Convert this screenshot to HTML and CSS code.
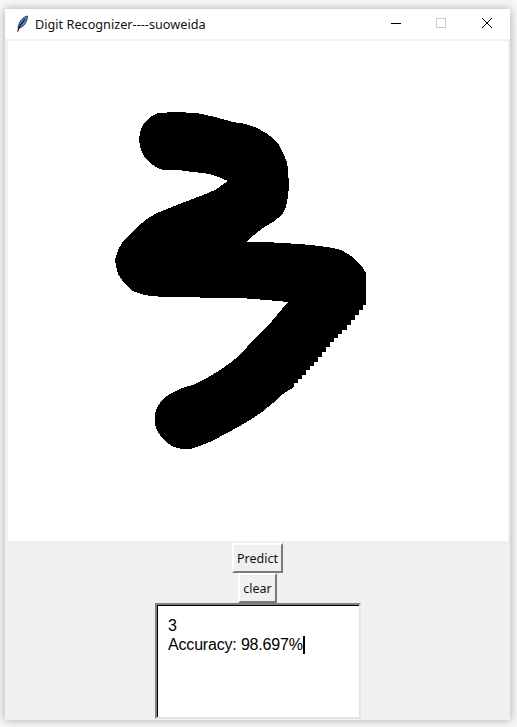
FILE: index.html
```html
<!DOCTYPE html>
<html lang="en">
<head>
<meta charset="utf-8">
<title>Digit Recognizer----suoweida</title>
<link rel="stylesheet" href="styles.css">
</head>
<body>
<div class="window">
  <header class="titlebar">
    <svg class="feather" viewBox="0 0 14 18" width="14" height="18" aria-hidden="true">
      <path d="M12.5 1C8 2 4.5 6 3.5 11L3 13.5C6 13 9 11 10.5 8C11.5 6 12.5 3.5 12.5 1Z" fill="#4f86c6" stroke="#1c2f4a" stroke-width="0.9"/>
      <path d="M10 4L4.5 11.5L2.6 16.5" fill="none" stroke="#111" stroke-width="1.1"/>
    </svg>
    <span class="title">Digit Recognizer----suoweida</span>
    <div class="controls">
      <svg class="ctl" viewBox="0 0 46 30" width="46" height="30" aria-hidden="true"><path d="M19 14.5H29" stroke="#000" fill="none" shape-rendering="crispEdges"/></svg>
      <svg class="ctl" viewBox="0 0 46 30" width="46" height="30" aria-hidden="true"><rect x="18.5" y="9.5" width="9" height="9" fill="none" stroke="#ccc" shape-rendering="crispEdges"/></svg>
      <svg class="ctl" viewBox="0 0 46 30" width="46" height="30" aria-hidden="true"><path d="M18 9L28 19M28 9L18 19" stroke="#000" fill="none" stroke-width="1"/></svg>
    </div>
  </header>
  <div class="client">
    <svg class="canvas" viewBox="8 41 500 500" width="500" height="500" aria-hidden="true">
      <polygon shape-rendering="crispEdges" fill="#000" points="158,113 175,112 197,113 215,117 233,122 246,124 257,128 266,133 273,138 279,145 283,153 287,162 288,170 289,185 288,197 286,207 282,215 273,222 263,228 254,235 246,242 265,242 300,244 320,246 333,248 341,250 348,254 354,258 358,263 363,268 366,273 366,305 363,305 363,310 359,310 359,315 355,315 355,320 351,320 351,325 347,325 347,330 342,330 342,334 338,334 338,338 334,338 334,342 330,342 330,347 326,347 326,352 322,352 322,357 318,357 318,362 314,362 314,366 310,366 310,370 306,370 306,375 302,375 302,379 298,379 298,383 294,383 294,387 283,394 273,403 262,412 250,420 238,427 227,433 212,441 197,447 190,449 182,449 174,447 167,443 161,437 157,430 155,424 155,414 157,408 160,403 165,397 172,393 182,388 193,385 207,378 220,370 230,363 240,355 247,347 253,340 260,333 267,327 277,315 288,302 267,300 240,298 217,298 183,297 165,297 150,296 141,294 133,291 127,286 122,280 118,274 116,266 115,260 118,250 122,243 129,235 137,227 147,219 157,213 167,209 177,205 190,200 203,195 215,190 228,181 221,178 213,175 203,173 193,172 178,170 163,170 156,167 150,163 145,158 142,152 140,146 139,140 140,132 143,125 147,120 152,116"/>
    </svg>
    <div class="panel">
      <button class="btn btn-predict" type="button">Predict</button>
      <button class="btn btn-clear" type="button">clear</button>
      <div class="textbox">3<br>Accuracy: 98.697%<span class="caret"></span></div>
    </div>
  </div>
</div>
</body>
</html>
```

FILE: styles.css
```css
* { box-sizing: border-box; }
html, body { margin: 0; height: 100%; }
body {
  background: #f7f7f7;
  padding: 9px 7px 0 5px;
  overflow: hidden;
}
.window {
  width: 505px;
  height: 711px;
  background: #f0f0f0;
  display: flex;
  flex-direction: column;
  box-shadow: 0 0 9px rgba(0, 0, 0, 0.32);
}
.titlebar {
  height: 30px;
  flex: none;
  background: #fff;
  display: flex;
  align-items: center;
  padding-left: 10px;
}
.feather { flex: none; }
.title {
  margin-left: 6px;
  font: 12.7px/1 "Noto Sans", "Liberation Sans", sans-serif;
  color: #111;
}
.controls { display: flex; margin-left: auto; }
.ctl { display: block; }
.client {
  flex: 1;
  padding: 2px 2px 0 3px;
  display: flex;
  flex-direction: column;
  min-height: 0;
}
.canvas { display: block; background: #fff; flex: none; }
.panel {
  display: flex;
  flex-direction: column;
  align-items: center;
  padding-top: 2px;
}
.btn {
  height: 30px;
  margin: 0 1px 0 0;
  padding: 0;
  font: 12.5px "Noto Sans", "Liberation Sans", sans-serif;
  color: #111;
  background: #f0f0f0;
  border: 2px solid;
  border-color: #fff #7a7a7a #7a7a7a #fff;
  border-radius: 0;
}
.btn-predict { width: 51px; }
.btn-clear { width: 39px; }
.textbox {
  width: 206px;
  height: 116px;
  background: #fff;
  border: 2px solid;
  border-color: #808080 #e4e4e4 #e4e4e4 #808080;
  box-shadow: inset 1px 1px 0 0 #000;
  padding: 11px 11px 0;
  font: 16px/19px "Liberation Sans", Arial, sans-serif;
  letter-spacing: -0.18px;
  color: #000;
}
.caret {
  display: inline-block;
  width: 2px;
  height: 18px;
  background: #000;
  vertical-align: -4px;
}
```
